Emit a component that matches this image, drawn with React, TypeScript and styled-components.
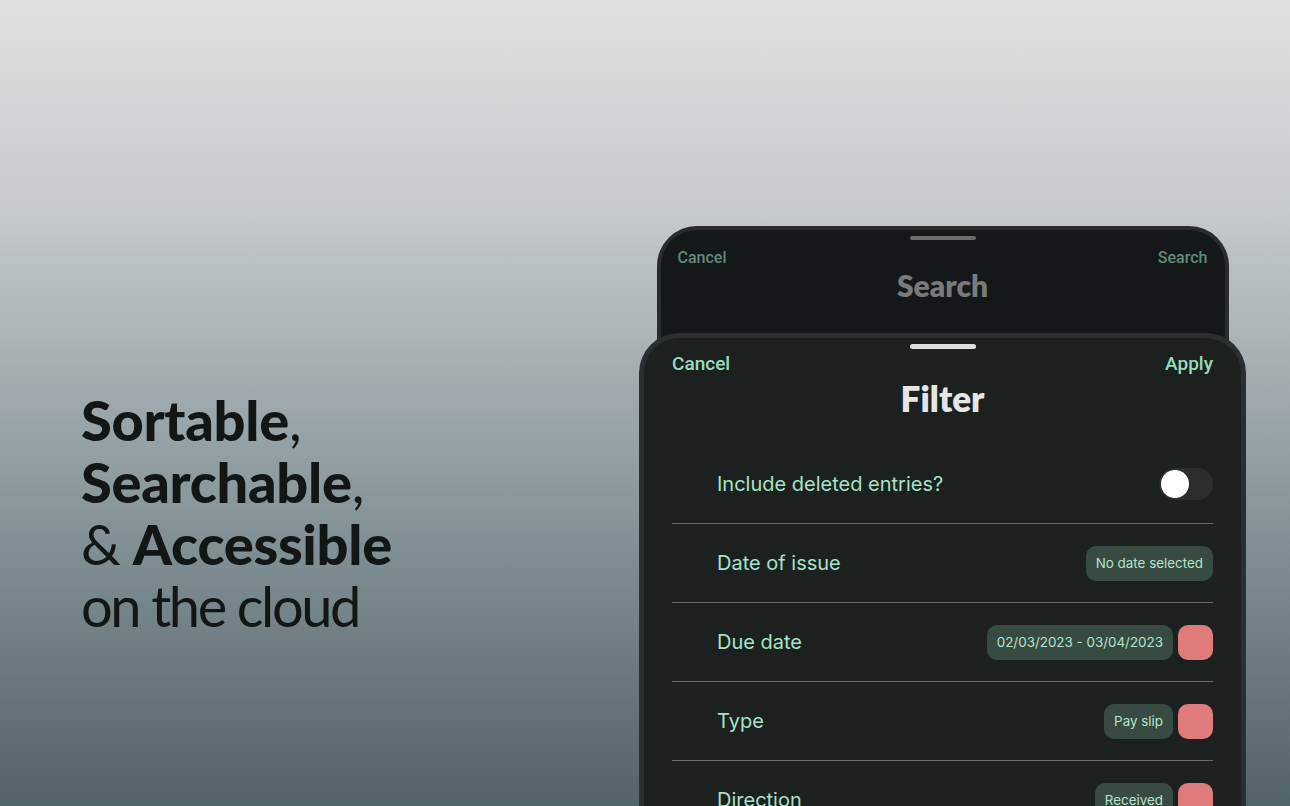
import React from "react";
import styled, { createGlobalStyle } from "styled-components";

const GlobalStyle = createGlobalStyle`
  html, body {
    margin: 0;
    padding: 0;
  }
  body {
    font-family: "Inter", "Liberation Sans", sans-serif;
  }
`;

const Page = styled.div`
  width: 1290px;
  height: 806px;
  overflow: hidden;
  display: flex;
  align-items: flex-start;
  background: linear-gradient(
    180deg,
    #e0e0e0 0%,
    #c7cbcc 25%,
    #9da9ac 50%,
    #75858a 75%,
    #536469 100%
  );
`;

const Pitch = styled.div`
  width: 639px;
  flex-shrink: 0;
  padding: 389px 0 0 81px;
  box-sizing: border-box;
`;

const Headline = styled.h1`
  margin: 0;
  font-family: "Lato", "Liberation Sans", sans-serif;
  font-size: 56px;
  line-height: 62px;
  color: #121715;
  font-weight: 400;
`;

const Strong = styled.span`
  font-weight: 900;
  letter-spacing: -0.3px;
`;

const Plain = styled.span`
  letter-spacing: -2.4px;
`;

const Devices = styled.div`
  width: 607px;
  flex-shrink: 0;
  padding-top: 226px;
  display: flex;
  flex-direction: column;
`;

const Sheet = styled.div<{ $front?: boolean }>`
  box-sizing: border-box;
  flex-shrink: 0;
  width: ${(p) => (p.$front ? "607px" : "572px")};
  margin: ${(p) => (p.$front ? "-13px 0 0" : "0 auto")};
  height: ${(p) => (p.$front ? "600px" : "120px")};
  border: ${(p) => (p.$front ? "5px solid #2c2f2f" : "4px solid #2a2c2c")};
  border-bottom: none;
  border-radius: 40px 40px 0 0;
  background: ${(p) => (p.$front ? "#1c2120" : "#151818")};
  display: flex;
  flex-direction: column;
  align-items: center;
  padding: ${(p) => (p.$front ? "6px 28px 0" : "6px 17px 0")};
`;

const Handle = styled.div<{ $front?: boolean }>`
  width: 66px;
  height: ${(p) => (p.$front ? "5px" : "4px")};
  border-radius: 3px;
  background: ${(p) => (p.$front ? "#dedede" : "#6b6b6b")};
`;

const TopBar = styled.div<{ $front?: boolean }>`
  align-self: stretch;
  display: flex;
  justify-content: space-between;
  margin-top: ${(p) => (p.$front ? "4px" : "9px")};
`;

const BarButton = styled.span<{ $front?: boolean }>`
  font-family: "Roboto", "Inter", sans-serif;
  font-weight: 500;
  font-size: ${(p) => (p.$front ? "19px" : "16px")};
  line-height: ${(p) => (p.$front ? "22px" : "18px")};
  color: ${(p) => (p.$front ? "#95dcbd" : "#5f8c7a")};
`;

const Title = styled.div<{ $front?: boolean }>`
  font-family: "Lato", "Liberation Sans", sans-serif;
  font-weight: 800;
  font-size: ${(p) => (p.$front ? "35px" : "30px")};
  line-height: ${(p) => (p.$front ? "40px" : "34px")};
  margin-top: ${(p) => (p.$front ? "3px" : "1px")};
  color: ${(p) => (p.$front ? "#e6e6e6" : "#7a7a7a")};
`;

const Rows = styled.div`
  align-self: stretch;
  margin-top: 27px;
  display: flex;
  flex-direction: column;
`;

const Row = styled.div`
  height: 78px;
  display: flex;
  align-items: center;
  justify-content: space-between;
  padding-left: 45px;
  border-bottom: 1px solid #666b6a;
`;

const Label = styled.span`
  font-family: "Inter", sans-serif;
  font-size: 20px;
  color: #a6e3c9;
`;

const Controls = styled.div`
  display: flex;
  gap: 5px;
`;

const Chip = styled.span`
  height: 35px;
  padding: 0 10px;
  border-radius: 10px;
  background: #374b42;
  color: #b6e3cf;
  font-family: "Inter", sans-serif;
  font-size: 13.4px;
  display: flex;
  align-items: center;
`;

const ClearButton = styled.span`
  width: 35px;
  height: 35px;
  border-radius: 10px;
  background: #e07b7b;
`;

const Toggle = styled.span`
  width: 54px;
  height: 32px;
  border-radius: 16px;
  background: #2a2e2d;
  display: flex;
  align-items: center;
  padding-left: 2px;
  box-sizing: border-box;
`;

const Knob = styled.span`
  width: 28px;
  height: 28px;
  border-radius: 50%;
  background: #ffffff;
`;

interface IFilter {
  label: string;
  value?: string;
  clearable?: boolean;
}

const filters: IFilter[] = [
  { label: "Date of issue", value: "No date selected" },
  { label: "Due date", value: "02/03/2023 - 03/04/2023", clearable: true },
  { label: "Type", value: "Pay slip", clearable: true },
  { label: "Direction", value: "Received", clearable: true },
];

const App: React.FC = () => {
  return (
    <Page>
      <GlobalStyle />
      <Pitch>
        <Headline>
          <Strong>Sortable</Strong>,
          <br />
          <Strong>Searchable</Strong>,
          <br />
          <Plain>&amp;</Plain> <Strong>Accessible</Strong>
          <br />
          <Plain>on the cloud</Plain>
        </Headline>
      </Pitch>
      <Devices>
        <Sheet>
          <Handle />
          <TopBar>
            <BarButton>Cancel</BarButton>
            <BarButton>Search</BarButton>
          </TopBar>
          <Title>Search</Title>
        </Sheet>
        <Sheet $front>
          <Handle $front />
          <TopBar $front>
            <BarButton $front>Cancel</BarButton>
            <BarButton $front>Apply</BarButton>
          </TopBar>
          <Title $front>Filter</Title>
          <Rows>
            <Row>
              <Label>Include deleted entries?</Label>
              <Toggle>
                <Knob />
              </Toggle>
            </Row>
            {filters.map((f) => (
              <Row key={f.label}>
                <Label>{f.label}</Label>
                <Controls>
                  <Chip>{f.value}</Chip>
                  {f.clearable && <ClearButton />}
                </Controls>
              </Row>
            ))}
          </Rows>
        </Sheet>
      </Devices>
    </Page>
  );
};

export default App;
